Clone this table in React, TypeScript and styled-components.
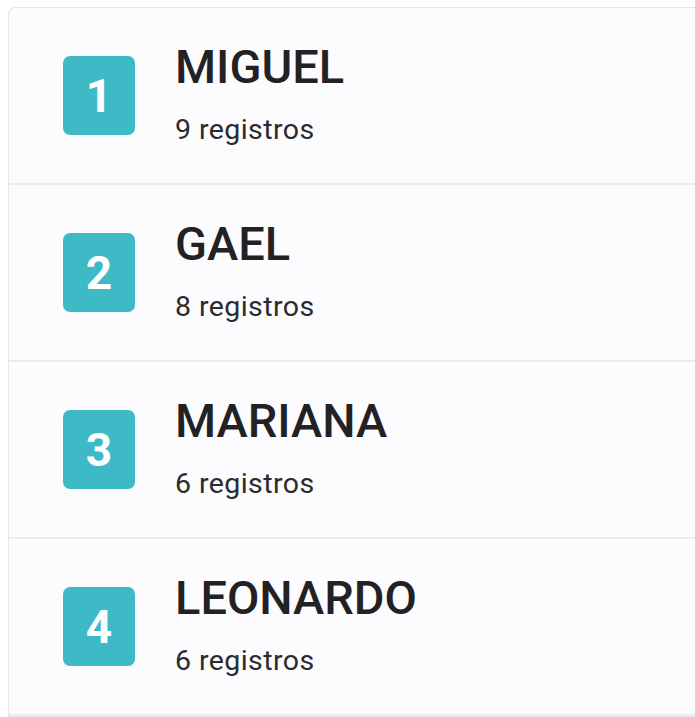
import styled, { createGlobalStyle } from "styled-components";

const GlobalStyle = createGlobalStyle`
  html, body {
    margin: 0;
    padding: 0;
    background: #ffffff;
    overflow: hidden;
  }
  body {
    font-family: Roboto, "Liberation Sans", sans-serif;
  }
`;

const Page = styled.div`
  padding: 7px 0 0 8px;
  width: 695px;
  height: 717px;
  box-sizing: border-box;
`;

const Card = styled.ul`
  list-style: none;
  margin: 0;
  padding: 0;
  width: 700px;
  background: #fcfbfe;
  border: 1px solid #e6e6e8;
  border-right: none;
  border-top-left-radius: 8px;
  overflow: hidden;
`;

const Row = styled.li`
  display: flex;
  align-items: center;
  height: 177px;
  padding-left: 54px;
  border-bottom: 2px solid #ebebed;
  box-sizing: border-box;
`;

const Badge = styled.div`
  flex: none;
  width: 72px;
  height: 79px;
  border-radius: 7px;
  background: #3ebac7;
  color: #ffffff;
  display: flex;
  align-items: center;
  justify-content: center;
  font-size: 46px;
  font-weight: 700;
  line-height: 1;
`;

const Info = styled.div`
  margin-left: 40px;
  margin-bottom: 6px;
  display: flex;
  flex-direction: column;
  gap: 19px;
`;

const Name = styled.div`
  font-size: 47px;
  line-height: 56px;
  font-weight: 500;
  color: #222224;
`;

const Count = styled.div`
  font-size: 28.5px;
  line-height: 32px;
  letter-spacing: 0.015em;
  color: #2b2b2d;
`;

const people = [
  { name: "MIGUEL", count: 9 },
  { name: "GAEL", count: 8 },
  { name: "MARIANA", count: 6 },
  { name: "LEONARDO", count: 6 },
];

export default function App() {
  return (
    <Page>
      <GlobalStyle />
      <Card>
        {people.map((p, i) => (
          <Row key={p.name}>
            <Badge>{i + 1}</Badge>
            <Info>
              <Name>{p.name}</Name>
              <Count>{p.count} registros</Count>
            </Info>
          </Row>
        ))}
      </Card>
    </Page>
  );
}
